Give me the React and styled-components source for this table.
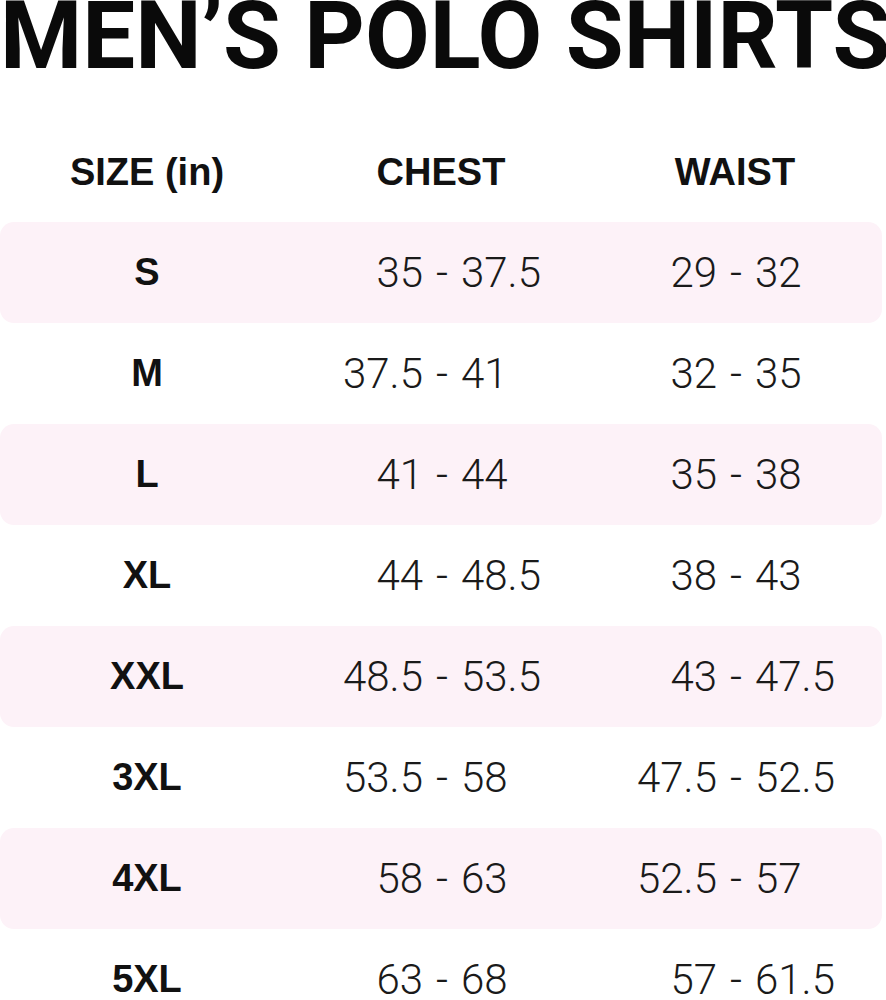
import React from 'react';
import styled, { createGlobalStyle } from 'styled-components';

const GlobalStyle = createGlobalStyle`
  html, body {
    margin: 0;
    padding: 0;
    background: #fff;
  }
  body {
    font-family: Roboto, "Liberation Sans", sans-serif;
    color: #111;
  }
`;

const Page = styled.div`
  width: 886px;
  overflow: hidden;
`;

const Title = styled.h1`
  margin: 0;
  height: 122px;
  font-size: 94px;
  font-weight: 700;
  line-height: 72px;
  text-align: center;
  white-space: nowrap;
  color: #0a0a0a;
`;

const Table = styled.div`
  display: flex;
  flex-direction: column;
`;

const Row = styled.div`
  display: grid;
  grid-template-columns: repeat(3, 1fr);
  align-items: center;
  height: ${p => (p.header ? '100px' : '101px')};
  width: 882px;
  border-radius: 14px;
  background: ${p => (p.shade ? '#fdf2f8' : 'transparent')};
`;

const HeadCell = styled.div`
  text-align: center;
  font-family: "Liberation Sans", Arial, sans-serif;
  font-size: 38px;
  font-weight: 700;
  color: #111;
`;

const SizeCell = styled.div`
  text-align: center;
  font-family: "Liberation Sans", Arial, sans-serif;
  font-size: 38px;
  font-weight: 700;
  color: #111;
`;

const RangeCell = styled.div`
  display: grid;
  grid-template-columns: 1fr auto 1fr;
  align-items: center;
  font-size: 42px;
  font-weight: 300;
  color: #1a1a1a;
  transform: translateX(${p => p.shift || 0}px);
`;

const Low = styled.span`
  text-align: right;
`;

const Dash = styled.span`
  margin: 0 13px;
`;

const High = styled.span`
  text-align: left;
`;

const rows = [
  ['S', '35', '37.5', '29', '32'],
  ['M', '37.5', '41', '32', '35'],
  ['L', '41', '44', '35', '38'],
  ['XL', '44', '48.5', '38', '43'],
  ['XXL', '48.5', '53.5', '43', '47.5'],
  ['3XL', '53.5', '58', '47.5', '52.5'],
  ['4XL', '58', '63', '52.5', '57'],
  ['5XL', '63', '68', '57', '61.5'],
];

const Range = ({ low, high, shift }) => (
  <RangeCell shift={shift}>
    <Low>{low}</Low>
    <Dash>-</Dash>
    <High>{high}</High>
  </RangeCell>
);

export default function App() {
  return (
    <Page>
      <GlobalStyle />
      <Title>MEN’S POLO SHIRTS</Title>
      <Table>
        <Row header>
          <HeadCell>SIZE (in)</HeadCell>
          <HeadCell>CHEST</HeadCell>
          <HeadCell>WAIST</HeadCell>
        </Row>
        {rows.map((r, i) => (
          <Row key={r[0]} shade={i % 2 === 0}>
            <SizeCell>{r[0]}</SizeCell>
            <Range low={r[1]} high={r[2]} shift={1} />
            <Range low={r[3]} high={r[4]} shift={1} />
          </Row>
        ))}
      </Table>
    </Page>
  );
}
